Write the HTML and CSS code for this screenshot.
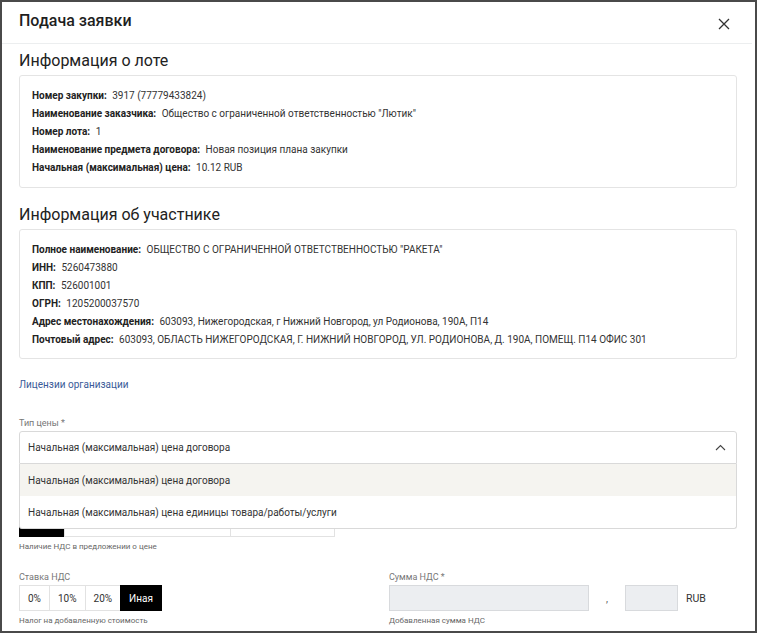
FILE: index.html
```html
<!DOCTYPE html>
<html lang="ru">
<head>
<meta charset="utf-8">
<title>Подача заявки</title>
<link rel="stylesheet" href="styles.css">
</head>
<body>
<div class="modal">
  <div class="modal-header">
    <h1 class="modal-title">Подача заявки</h1>
    <button class="close" aria-label="Закрыть">
      <svg width="12" height="12" viewBox="0 0 12 12"><path d="M1 1L11 11M11 1L1 11" stroke="#333" stroke-width="1.3" fill="none"/></svg>
    </button>
  </div>
  <div class="modal-body">
    <h2 class="section-title first">Информация о лоте</h2>
    <div class="card">
      <div class="row"><b>Номер закупки:</b> 3917 (77779433824)</div>
      <div class="row"><b>Наименование заказчика:</b> Общество с ограниченной ответственностью "Лютик"</div>
      <div class="row"><b>Номер лота:</b> 1</div>
      <div class="row"><b>Наименование предмета договора:</b> Новая позиция плана закупки</div>
      <div class="row"><b>Начальная (максимальная) цена:</b> 10.12 RUB</div>
    </div>

    <h2 class="section-title">Информация об участнике</h2>
    <div class="card card2">
      <div class="row"><b>Полное наименование:</b> ОБЩЕСТВО С ОГРАНИЧЕННОЙ ОТВЕТСТВЕННОСТЬЮ "РАКЕТА"</div>
      <div class="row"><b>ИНН:</b> 5260473880</div>
      <div class="row"><b>КПП:</b> 526001001</div>
      <div class="row"><b>ОГРН:</b> 1205200037570</div>
      <div class="row"><b>Адрес местонахождения:</b> 603093, Нижегородская, г Нижний Новгород, ул Родионова, 190А, П14</div>
      <div class="row"><b>Почтовый адрес:</b> 603093, ОБЛАСТЬ НИЖЕГОРОДСКАЯ, Г. НИЖНИЙ НОВГОРОД, УЛ. РОДИОНОВА, Д. 190А, ПОМЕЩ. П14 ОФИС 301</div>
    </div>

    <a class="link" href="#">Лицензии организации</a>

    <div class="field field-price">
      <div class="label">Тип цены *</div>
      <div class="select-wrap">
        <div class="select">
          <span>Начальная (максимальная) цена договора</span>
          <svg class="chev" width="11" height="7" viewBox="0 0 11 7"><path d="M1 6L5.5 1.5L10 6" stroke="#444" stroke-width="1.1" fill="none"/></svg>
        </div>
        <div class="dropdown">
          <div class="option active">Начальная (максимальная) цена договора</div>
          <div class="option">Начальная (максимальная) цена единицы товара/работы/услуги</div>
        </div>
      </div>
    </div>

    <div class="field field-vat">
      <div class="label-spacer"></div>
      <div class="toggle">
        <span class="tbtn on w1"></span>
        <span class="tbtn w2"></span>
        <span class="tbtn w3"></span>
      </div>
      <div class="help">Наличие НДС в предложении о цене</div>
    </div>

    <div class="grid">
      <div class="field">
        <div class="label">Ставка НДС</div>
        <div class="toggle">
          <span class="tbtn">0%</span>
          <span class="tbtn">10%</span>
          <span class="tbtn">20%</span>
          <span class="tbtn on">Иная</span>
        </div>
        <div class="help">Налог на добавленную стоимость</div>
      </div>
      <div class="field">
        <div class="label">Сумма НДС *</div>
        <div class="sum">
          <div class="input big"></div>
          <span class="comma">,</span>
          <div class="input small"></div>
          <span class="cur">RUB</span>
        </div>
        <div class="help">Добавленная сумма НДС</div>
      </div>
    </div>
  </div>
</div>
</body>
</html>
```

FILE: styles.css
```css
* { box-sizing: border-box; }
html, body { margin: 0; padding: 0; background: #fff; }
body {
  font-family: Roboto, "Open Sans", sans-serif;
  color: #333;
  width: 757px;
  height: 633px;
  overflow: hidden;
}
.modal {
  width: 757px;
  height: 633px;
  border: 2px solid #4a4a4a;
  background: #fff;
  overflow: hidden;
}
.modal-header {
  height: 42px;
  display: flex;
  align-items: center;
  justify-content: space-between;
  padding: 0 22px 0 17px;
  border-bottom: 1px solid #eceeef;
  margin-right: 3px;
}
.modal-title {
  margin: 0;
  font-size: 16px;
  font-weight: 500;
  color: #1f1f1f;
  line-height: 24px;
  margin-top: -4px;
}
.close {
  border: 0;
  background: none;
  padding: 0;
  width: 12px;
  height: 12px;
  display: flex;
  margin-top: 2px;
}
.modal-body {
  padding: 0 18px 0 17px;
}
.section-title {
  margin: 16px 0 3px;
  font-size: 16px;
  font-weight: 400;
  line-height: 22px;
  color: #222;
}
.section-title.first { margin-top: 6px; }
.card {
  border: 1px solid #e4e4e4;
  border-radius: 3px;
  padding: 11px 12px 10px;
}
.card2 { padding: 11px 12px 9px; }
.row {
  font-size: 10px;
  line-height: 18px;
  color: #333;
  white-space: nowrap;
}
.row b { font-weight: 700; color: #222; margin-right: 3px; }
.link {
  display: block;
  margin-top: 17px;
  font-size: 10px;
  line-height: 18px;
  color: #3a5b98;
  text-decoration: none;
}
.field-price { margin-top: 23px; position: relative; }
.label {
  font-size: 9px;
  line-height: 12px;
  color: #777;
  margin-bottom: 2px;
}
.label-spacer { height: 17px; }
.select-wrap { position: relative; }
.select {
  height: 33px;
  border: 1px solid #d9d9d9;
  border-radius: 3px 3px 0 0;
  display: flex;
  align-items: center;
  justify-content: space-between;
  padding: 0 9px 0 8px;
  font-size: 10px;
  color: #333;
}
.chev { margin-right: 1px; }
.dropdown {
  position: absolute;
  left: 0;
  right: 0;
  top: 33px;
  background: #fff;
  border: 1px solid #d9d9d9;
  border-top: 0;
  border-radius: 0 0 3px 3px;
  z-index: 5;
}
.option {
  height: 32px;
  display: flex;
  align-items: center;
  padding: 0 8px;
  font-size: 10px;
  color: #333;
}
.option.active { background: #f5f4f0; }
.field-vat { margin-top: 30px; }
.toggle { display: flex; }
.tbtn {
  height: 26px;
  display: flex;
  align-items: center;
  justify-content: center;
  padding: 0 8px;
  border: 1px solid #e2e2e2;
  margin-left: -1px;
  font-size: 10px;
  color: #333;
  background: #fff;
}
.tbtn:first-child { margin-left: 0; }
.tbtn.on { background: #000; color: #fff; border-color: #000; }
.w1 { width: 46px; }
.w2 { width: 167px; }
.w3 { width: 105px; }
.help {
  font-size: 8px;
  line-height: 12px;
  color: #666;
  margin-top: 4px;
}
.grid {
  display: grid;
  grid-template-columns: 348px 1fr;
  column-gap: 22px;
  margin-top: 18px;
}
.sum { display: flex; align-items: center; }
.input {
  height: 26px;
  background: #eceef1;
  border: 1px solid #d8dadd;
}
.input.big { width: 200px; }
.input.small { width: 53px; }
.comma { width: 36px; text-align: center; font-size: 10px; color: #555; }
.cur { margin-left: 8px; font-size: 10.5px; color: #333; }
```
